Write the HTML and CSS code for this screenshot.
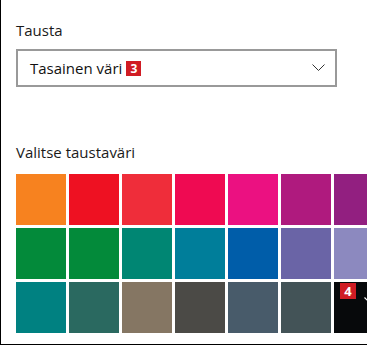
FILE: index.html
```html
<!DOCTYPE html>
<html lang="fi">
  <head>
    <meta charset="UTF-8">
    <title>Tausta</title>
    <link rel="stylesheet" href="styles.css">
  </head>
  <body>
    <div class="panel">
      <div class="label">Tausta</div>
      <div class="select">
        <span class="select-text">Tasainen väri</span>
        <span class="badge">3</span>
        <svg class="chevron" width="13" height="8" viewBox="0 0 13 8">
          <path d="M0.5 0.5 L6.5 6.5 L12.5 0.5" fill="none" stroke="#333" stroke-width="1"/>
        </svg>
      </div>
      <div class="label label-colors">Valitse taustaväri</div>
      <div class="swatches">
        <div class="swatch" style="background:#f7821f"></div>
        <div class="swatch" style="background:#ee1122"></div>
        <div class="swatch" style="background:#ef2d3a"></div>
        <div class="swatch" style="background:#ef0a52"></div>
        <div class="swatch" style="background:#eb1181"></div>
        <div class="swatch" style="background:#af1a7e"></div>
        <div class="swatch" style="background:#921f80"></div>

        <div class="swatch" style="background:#038a3a"></div>
        <div class="swatch" style="background:#038a3a"></div>
        <div class="swatch" style="background:#008673"></div>
        <div class="swatch" style="background:#007e9a"></div>
        <div class="swatch" style="background:#005da9"></div>
        <div class="swatch" style="background:#6a64a6"></div>
        <div class="swatch" style="background:#8c89bf"></div>

        <div class="swatch" style="background:#008181"></div>
        <div class="swatch" style="background:#2a6960"></div>
        <div class="swatch" style="background:#857663"></div>
        <div class="swatch" style="background:#4b4a46"></div>
        <div class="swatch" style="background:#485b6a"></div>
        <div class="swatch" style="background:#435357"></div>
        <div class="swatch selected" style="background:#07090b">
          <span class="badge badge-corner">4</span>
          <svg class="check" width="8" height="6" viewBox="0 0 8 6">
            <path d="M0.5 2.5 L3 5 L7.5 0.5" fill="none" stroke="#fff" stroke-width="1.2"/>
          </svg>
        </div>
      </div>
    </div>
  </body>
</html>
```

FILE: styles.css
```css
body {
  margin: 0;
  font-family: 'Open Sans', 'Noto Sans', sans-serif;
  background: #ffffff;
  color: #000000;
}

.panel {
  width: 367px;
  height: 345px;
  border-left: 1px solid #000000;
  border-bottom: 1px solid #000000;
  padding: 20px 0 0 15px;
  box-sizing: border-box;
  overflow: hidden;
}

.label {
  font-size: 15px;
  line-height: 20px;
  color: #1a1a1a;
}

.label-colors {
  margin-top: 55px;
}

.select {
  margin-top: 9px;
  width: 321px;
  height: 38px;
  border: 2px solid #999999;
  box-sizing: border-box;
  display: flex;
  align-items: center;
  padding: 0 10px 0 12px;
  position: relative;
}

.select-text {
  font-size: 15px;
  color: #111111;
  margin-right: 4px;
}

.badge {
  display: inline-flex;
  align-items: center;
  justify-content: center;
  width: 15px;
  height: 15px;
  background: #d01c24;
  color: #ffffff;
  font-weight: bold;
  font-size: 12px;
  line-height: 15px;
}

.chevron {
  margin-left: auto;
}

.swatches {
  margin-top: 12px;
  display: grid;
  grid-template-columns: repeat(7, 50px);
  grid-auto-rows: 51px;
  gap: 3px;
  width: 400px;
}

.swatch {
  position: relative;
}

.badge-corner {
  position: absolute;
  left: 6px;
  top: 1px;
  width: 16px;
  height: 16px;
  font-size: 13px;
}

.check {
  position: absolute;
  left: 30px;
  top: 13px;
}
```
